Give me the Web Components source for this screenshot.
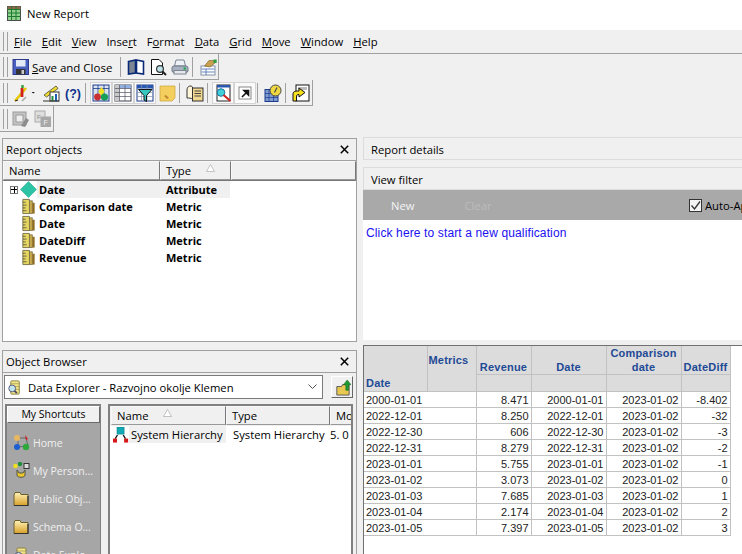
<!DOCTYPE html>
<html>
<head>
<meta charset="utf-8">
<title>New Report</title>
<style>
    html, body { margin: 0; padding: 0; background: #f0f0f0; }
    body { width: 742px; height: 554px; overflow: hidden; font-family: "Open Sans", "Noto Sans", sans-serif; font-size: 11.25px; color: #000; }
    .main { display: grid; grid-template-columns: 355px 379px; column-gap: 6px; padding: 6px 0 0 2px; }
    .left, .right { display: flex; flex-direction: column; }
    .left { gap: 8px; }
</style>
</head>
<body>
<title-bar>New Report</title-bar>
<menu-bar></menu-bar>
<tool-bar width="219"><tool-icon name="save" label="Save and Close"></tool-icon><tool-sep></tool-sep><tool-icon name="book"></tool-icon><tool-icon name="preview"></tool-icon><tool-icon name="print"></tool-icon><tool-sep></tool-sep><tool-icon name="hand"></tool-icon></tool-bar>
<tool-bar width="313"><tool-icon name="wand"></tool-icon><tool-icon name="drop" small></tool-icon><tool-icon name="chart"></tool-icon><tool-icon name="help"></tool-icon><tool-sep></tool-sep><tool-icon name="objects" on></tool-icon><tool-icon name="grid" on></tool-icon><tool-icon name="filter" on></tool-icon><tool-icon name="note"></tool-icon><tool-sep></tool-sep><tool-icon name="scroll"></tool-icon><tool-sep></tool-sep><tool-icon name="zoom" on></tool-icon><tool-icon name="link" on></tool-icon><tool-sep></tool-sep><tool-icon name="clock"></tool-icon><tool-sep></tool-sep><tool-icon name="arrow"></tool-icon></tool-bar>
<tool-bar width="54"><tool-icon name="gray1"></tool-icon><tool-icon name="gray2"></tool-icon></tool-bar>
<div class="main">
    <div class="left">
        <report-objects></report-objects>
        <object-browser></object-browser>
    </div>
    <div class="right">
        <report-details></report-details>
        <report-grid></report-grid>
    </div>
</div>
<script>
const ICONS = {
    save: '<rect x="1" y="1.5" width="15.5" height="15" fill="#4a5fc0" stroke="#2c3a8c"/><rect x="4" y="2" width="9.5" height="6.5" fill="#e4e9f6"/><rect x="4" y="11" width="9.5" height="5.5" fill="#333"/><rect x="9.5" y="12" width="2.5" height="4" fill="#ccc"/>',
    book: '<path d="M1.5 3.5 L8.5 2 V15 L1.5 16Z" fill="#7d8794" stroke="#0a2a78" stroke-width="1.6"/><path d="M9.5 2 L16.5 3.5 V16 L9.5 15Z" fill="#fff" stroke="#0a2a78" stroke-width="1.6"/>',
    preview: '<path d="M2.5 1.5H10L13.5 5V16.5H2.5Z" fill="#fff" stroke="#111"/><circle cx="11" cy="11" r="3.4" fill="#bfe2e8" stroke="#333" stroke-width="1.2"/><path d="M13.5 13.5L17 17" stroke="#222" stroke-width="1.9"/>',
    print: '<path d="M5 2H13L14.5 8H3.5Z" fill="#eef1f5" stroke="#7a8494"/><rect x="1" y="8" width="16" height="6.5" rx="2" fill="#a8b2c0" stroke="#6d7786"/><rect x="3" y="12.5" width="12" height="3.5" fill="#e6e8ec" stroke="#7a8494"/><rect x="12.5" y="9.5" width="2.5" height="2" fill="#1ca84a"/>',
    hand: '<rect x="2" y="8" width="14" height="9" fill="#fff" stroke="#8090a8"/><path d="M2.5 11H15.5M2.5 14H15.5M7 11V17" stroke="#4068b0" stroke-width=".8"/><path d="M5.5 8L10 2.5H14.5L16 5L11 9Z" fill="#c9a050" stroke="#7a5a20" stroke-width=".6"/><rect x="14.5" y="1.5" width="3.2" height="3.5" fill="#2f9e44"/>',
    wand: '<path d="M3 17L14 4" stroke="#e6c800" stroke-width="2.6"/><path d="M10 13L10 4" stroke="#d02020" stroke-width="2.8"/><path d="M10.5 4V1" stroke="#30a030" stroke-width="2.4"/><path d="M10 17L14 13" stroke="#aaa" stroke-width="1.6"/><path d="M3 17l3-1" stroke="#222"/>',
    drop: '<path d="M1 7H7L4 10Z" fill="#111"/>',
    chart: '<path d="M2 11L14 2L16 4.5L4.5 13Z" fill="#f0dc30" stroke="#333" stroke-width=".7"/><rect x="8" y="8" width="9" height="9" fill="#fff" stroke="#333"/><rect x="9.5" y="12" width="2" height="5" fill="#1c8f3c"/><rect x="13" y="10" width="2" height="7" fill="#1c5fb0"/><path d="M1 17H17" stroke="#333"/>',
    help: '<text x="9" y="13.5" text-anchor="middle" font-family="Liberation Sans" font-size="12.5" fill="#10308c" font-weight="700">(?)</text>',
    objects: '<rect x="1" y="1" width="16" height="16" fill="#dbe3f3" stroke="#1a3a8c"/><path d="M1 4.5H17M6 1V17M12 1V17" stroke="#1a3a8c" stroke-width=".8"/><path d="M9.5 3l3.2 4.5-3.2 4.5-3.2-4.5z" fill="#f0e020"/><circle cx="5.5" cy="13" r="3.4" fill="#c93030"/><circle cx="12.5" cy="13" r="3.6" fill="#18a058"/>',
    grid: '<rect x="1" y="1" width="16" height="16" fill="#fff" stroke="#445"/><rect x="1" y="1" width="16" height="3.5" fill="#8fb0e0"/><rect x="1" y="1" width="4.5" height="16" fill="#c8c8c8"/><path d="M1 4.5H17M1 8.5H17M1 12.5H17M5.5 1V17M11 1V17" stroke="#556" stroke-width=".7"/>',
    filter: '<rect x="1" y="1" width="16" height="16" fill="#fff" stroke="#1a3a8c"/><rect x="1" y="1" width="16" height="3.5" fill="#2a58b0"/><path d="M5.5 1V17M11 1V17M1 8.5H17M1 12.5H17" stroke="#8090b0" stroke-width=".7"/><path d="M2.5 5.5H16L10.5 11.5V17.5L8 16V11.5Z" fill="#36c8c0" stroke="#111"/>',
    note: '<path d="M2 2H17V14L14 17H2Z" fill="#f4cf5e" stroke="#c8a038" stroke-width=".7"/><path d="M6 12l3 3 2-1-3-3z" fill="#c08830"/>',
    scroll: '<path d="M1 6C1 2 5 1 6.5 3V15C5 14 3 14 1 14Z" fill="#fff6d8" stroke="#333"/><rect x="6.5" y="4" width="10.5" height="13" fill="#f0d890" stroke="#333"/><path d="M8.5 7H15M8.5 9.5H15M8.5 12H15" stroke="#333" stroke-width=".9"/>',
    zoom: '<rect x="3" y="1" width="13" height="16" fill="#fff" stroke="#222"/><rect x="3" y="1" width="13" height="2.5" fill="#2a58b0"/><circle cx="7" cy="8.5" r="3.8" fill="#40d0d8" stroke="#1a70a0"/><path d="M9.5 11L16.5 17" stroke="#d02020" stroke-width="2"/>',
    link: '<rect x="3" y="3" width="12" height="12" fill="#fff" stroke="#888"/><path d="M6 13L10.5 8.5M8 6.5H12.5V11Z" stroke="#111" stroke-width="1.6" fill="#111"/>',
    clock: '<rect x="1" y="5.5" width="13" height="12" fill="#7f9bd0" stroke="#1a3a8c"/><path d="M1 9.5H14M1 13.5H14M5 5.5V17M9.5 5.5V17" stroke="#1a3a8c" stroke-width=".7"/><circle cx="11.5" cy="6.5" r="5.5" fill="#f0d840" stroke="#444"/><path d="M13 3.5L10.5 8.5" stroke="#444" stroke-width="1.1"/>',
    arrow: '<rect x="4" y="1" width="13" height="16" fill="#fff" stroke="#111"/><rect x="6" y="3" width="9" height="3" fill="#bbb"/><path d="M1 17V10C1 7 4 7 7 7V4L13 8.5L7 13V10.5C5 10.5 4.5 11 4.5 13V17Z" fill="#f6e020" stroke="#111"/>',
    gray1: '<rect x="1" y="2" width="13" height="13" fill="#c4c4c4" stroke="#9a9a9a"/><rect x="4" y="5" width="7" height="7" fill="#eee" stroke="#9a9a9a"/><path d="M9 16L14 8L17 10L13 17Z" fill="#8c8c8c"/>',
    gray2: '<rect x="1" y="1" width="10" height="11" fill="#dedede" stroke="#aaa"/><rect x="6.5" y="6.5" width="10.5" height="10.5" fill="#a8a8a8"/><text x="3" y="8.5" font-family="Liberation Sans" font-size="6" fill="#888">F</text><text x="9.5" y="15" font-family="Liberation Sans" font-size="7" fill="#eee">F</text>',
    metric: '<g transform="translate(2 0)"><path d="M1 1.5H8V16.5H1Z" fill="#e6d760" stroke="#77714a"/><path d="M1 4.5H4M1 7.5H5M1 10.5H4M1 13.5H5" stroke="#444" stroke-width=".8"/><rect x="8" y="3" width="3" height="13.5" fill="#c9a94c" stroke="#77714a" stroke-width=".8"/><rect x="11" y="5" width="2.5" height="11.5" fill="#8f6d22"/></g>',
    attribute: '<path d="M9 .5L17.5 9L9 17.5L.5 9Z" fill="#2cc4a4" stroke="#1ea58a" stroke-width=".6"/>',
    hierarchy: '<rect x="4.5" y="0" width="8" height="8" fill="#11a9b4" stroke="#0a7a88" stroke-width=".6"/><path d="M5 9L2.5 13M11.5 9L14 13" stroke="#111" stroke-width="1.5"/><rect x="0" y="13" width="4.5" height="4.5" fill="#d81818"/><rect x="12.5" y="13" width="4.5" height="4.5" fill="#d81818"/>',
    home: '<path d="M5 4L13 4L15 12L5 13Z" fill="none" stroke="#666"/><circle cx="4" cy="4" r="3" fill="#e8b860"/><path d="M12 1L15 5L13 6Z" fill="#d81818"/><circle cx="4" cy="13" r="3" fill="#1c5fd0"/><circle cx="13" cy="13" r="3.2" fill="#2fa83c"/>',
    personal: '<path d="M4 8V13C4 16 12 16 12 13V8L10 11H6Z" fill="#ecc82c" stroke="#554"/><circle cx="2.5" cy="4" r="2.3" fill="#f0e020"/><circle cx="7" cy="2" r="2.2" fill="#1c8f3c"/><rect x="11" y="1.5" width="5" height="5" fill="#ddd" stroke="#333"/>',
    folder: '<path d="M1 5L2 2.5H7L8 4.5H15V15.5H1Z" fill="url(#fg)" stroke="#6a6030"/><defs><linearGradient id="fg" x1="0" y1="0" x2="0" y2="1"><stop offset="0" stop-color="#fff2b8"/><stop offset="1" stop-color="#d8a028"/></linearGradient></defs><path d="M1 15.5H15V6" fill="none" stroke="#333" stroke-width="1.2"/>',
    explorer: '<rect x="4" y="2" width="9" height="14" rx="1" fill="#f3e68a" stroke="#8a8040"/><path d="M4 5H13M4 8H13M4 11H13" stroke="#9a9050" stroke-width=".7"/><circle cx="5.5" cy="10" r="3.6" fill="#bfe6ee" stroke="#557"/><path d="M8 12.5L10.5 15" stroke="#446" stroke-width="1.8"/>',
    up: '<path d="M3 8H8L9 6H16V17H3Z" fill="#e8c850" stroke="#555"/><path d="M14 1L18 6H15.5V12H12.5V6H10Z" fill="#1f9a30" stroke="#0c5c18" stroke-width=".5"/>'
};

function svgIcon(name, size)
{
    return `<svg width="${size}" height="${size}" viewBox="0 0 18 18" style="display:block;flex:none">${ICONS[name]}</svg>`;
}

class TitleBar extends HTMLElement
{
    constructor()
    {
        super();
        this.attachShadow({ mode: 'open' });
        this.shadowRoot.innerHTML = `
            <style>
                :host { display: flex; align-items: center; height: 30px; box-sizing: border-box; padding: 0 0 3px 7px; gap: 6px; background: #fff; font-size: 11.25px; color: #000; }
            </style>
            <svg width="14" height="15" viewBox="0 0 14 15">
                <rect x=".5" y=".5" width="13" height="14" fill="#8fd08f" stroke="#4c4c4c"/>
                <rect x=".5" y=".5" width="13" height="3" fill="#8a6a4a"/>
                <path d="M.5 3.5H13.5M.5 7H13.5M.5 10.5H13.5M4.5 .5V14.5M9 .5V14.5" stroke="#1e7a2e" stroke-width="1"/>
            </svg>
            <slot></slot>
        `;
    }
}

class MenuBar extends HTMLElement
{
    constructor()
    {
        super();
        this.attachShadow({ mode: 'open' });
        const items = [['F', 'ile'], ['E', 'dit'], ['V', 'iew'], ['Inse', 'r', 't'], ['F', 'o', 'rmat'], ['D', 'ata'], ['G', 'rid'], ['M', 'ove'], ['W', 'indow'], ['H', 'elp']];
        const html = items.map(i =>
        {
            if (i.length === 3) return `<span>${i[0]}<u>${i[1]}</u>${i[2]}</span>`;
            return `<span><u>${i[0]}</u>${i[1]}</span>`;
        }).join('');
        this.shadowRoot.innerHTML = `
            <style>
                :host { display: flex; align-items: center; height: 23px; border-bottom: 1px solid #a0a0a0; padding-left: 3px; background: #f0f0f0; font-size: 11.25px; }
                .grip { width: 3px; height: 19px; border-left: 1px solid #a0a0a0; border-right: 1px solid #a0a0a0; margin-right: 6px; }
                .items { display: flex; gap: 10px; }
                u { text-underline-offset: 1px; }
            </style>
            <div class="grip"></div>
            <div class="items">${html}</div>
        `;
    }
}

class ToolBar extends HTMLElement
{
    constructor()
    {
        super();
        this.attachShadow({ mode: 'open' });
        this.shadowRoot.innerHTML = `
            <style>
                :host { display: flex; align-items: center; box-sizing: border-box; height: 26px; border-bottom: 1px solid #a0a0a0; border-right: 1px solid #a0a0a0; padding: 1px 0 0 3px; }
                .grip { width: 3px; height: 20px; border-left: 1px solid #a0a0a0; border-right: 1px solid #a0a0a0; margin-right: 2px; flex: none; }
                .row { display: flex; align-items: center; }
            </style>
            <div class="grip"></div>
            <div class="row"><slot></slot></div>
        `;
    }

    connectedCallback()
    {
        this.style.width = this.getAttribute('width') + 'px';
    }
}

class ToolSep extends HTMLElement
{
    constructor()
    {
        super();
        this.attachShadow({ mode: 'open' });
        this.shadowRoot.innerHTML = `
            <style>:host { display: block; width: 1px; height: 20px; background: #a0a0a0; margin: 0 4px 0 1px; }</style>
        `;
    }
}

class ToolIcon extends HTMLElement
{
    connectedCallback()
    {
        const name = this.getAttribute('name');
        const label = this.getAttribute('label');
        const small = this.hasAttribute('small');
        let caption = '';
        if (label) caption = `<span class="cap"><u>${label[0]}</u>${label.slice(1)}</span>`;
        this.attachShadow({ mode: 'open' });
        this.shadowRoot.innerHTML = `
            <style>
                :host { display: flex; align-items: center; justify-content: center; height: 22px; box-sizing: border-box; gap: 2px; flex: none; width: ${label ? 'auto' : (small ? '8px' : '22px')}; padding: 0 ${label ? '7px 0 2px' : '0'}; font-size: 11.5px; }
                :host([on]) { background: #fafafa; border: 1px solid #d4d4d4; }
                .cap { white-space: nowrap; }
            </style>
            ${svgIcon(name, small ? 10 : 18)}${caption}
        `;
    }
}

class DockPanel extends HTMLElement
{
    constructor()
    {
        super();
        this.attachShadow({ mode: 'open' });
        this.shadowRoot.innerHTML = `
            <style>
                :host { display: block; box-sizing: border-box; border: 1px solid #a0a0a0; font-size: 11.25px; }
                .head { display: flex; align-items: center; justify-content: space-between; height: 21px; padding: 0 7px 0 3px; border-bottom: 1px solid #a0a0a0; }
                svg { display: block; }
            </style>
            <div class="head"><slot name="title"></slot><svg width="9" height="9"><path d="M.8 .8L8.2 8.2M8.2 .8L.8 8.2" stroke="#000" stroke-width="1.5"/></svg></div>
            <slot></slot>
        `;
    }
}

class ColHeader extends HTMLElement
{
    constructor()
    {
        super();
        this.attachShadow({ mode: 'open' });
        this.shadowRoot.innerHTML = `
            <style>
                :host { display: flex; align-items: center; box-sizing: border-box; height: 100%; flex: none; background: #f0f0f0; border: 1px solid; border-color: #f8f8f8 #777 #999 #f8f8f8; padding-left: 5px; font-size: 11.25px; white-space: nowrap; overflow: hidden; }
            </style>
            <slot></slot>
        `;
    }

    connectedCallback()
    {
        if (this.hasAttribute('sort'))
        {
            const s = document.createElementNS('http://www.w3.org/2000/svg', 'svg');
            s.setAttribute('width', '9');
            s.setAttribute('height', '8');
            s.innerHTML = '<path d="M4.5 .5L8.5 7.5H.5Z" fill="#fff" stroke="#aaa" stroke-width=".7"/>';
            s.style.margin = '-6px 0 0 ' + this.getAttribute('sort') + 'px';
            s.style.display = 'block';
            this.shadowRoot.appendChild(s);
        }
    }
}

class ReportObjects extends HTMLElement
{
    constructor()
    {
        super();
        this.attachShadow({ mode: 'open' });
        const rows = [
            ['attribute', 'Date', 'Attribute'],
            ['metric', 'Comparison date', 'Metric'],
            ['metric', 'Date', 'Metric'],
            ['metric', 'DateDiff', 'Metric'],
            ['metric', 'Revenue', 'Metric']
        ];
        const html = rows.map((r, i) => `
            <div class="row ${i === 0 ? 'sel' : ''}">
                <span class="exp">${i === 0 ? '<b></b>' : ''}</span>
                <span class="ic">${svgIcon(r[0], 17)}</span>
                <span class="name">${r[1]}</span>
                <span class="type">${r[2]}</span>
            </div>`).join('');
        this.shadowRoot.innerHTML = `
            <style>
                :host { display: block; }
                dock-panel { height: 204px; }
                .cols { display: flex; height: 19px; border-bottom: 1px solid #777; }
                .rows { background: #fff; height: 160px; font-weight: 700; font-size: 11px; }
                .row { display: flex; align-items: center; height: 17px; }
                .exp { width: 8px; height: 8px; margin: 0 0 0 7px; flex: none; }
                .exp b { display: block; width: 8px; height: 8px; box-sizing: border-box; border: 1px solid #777; background: linear-gradient(#000,#000) center/6px 1px no-repeat, linear-gradient(#000,#000) center/1px 6px no-repeat, #fff; }
                .ic { width: 21px; flex: none; display: flex; justify-content: center; }
                .name { flex: none; box-sizing: border-box; margin-left: -2px; padding-left: 2px; width: 122px; }
                .type { width: 71px; padding-left: 7px; box-sizing: border-box; }
                .sel .name, .sel .type { background: #f0f0f0; height: 17px; line-height: 17px; }
            </style>
            <dock-panel>
                <span slot="title">Report objects</span>
                <div class="cols">
                    <col-header style="width:157px">Name</col-header>
                    <col-header style="width:71px" sort="15">Type</col-header>
                    <col-header style="flex:1"></col-header>
                </div>
                <div class="rows">${html}</div>
            </dock-panel>
        `;
    }
}

class ObjectBrowser extends HTMLElement
{
    constructor()
    {
        super();
        this.attachShadow({ mode: 'open' });
        const shortcuts = [['home', 'Home'], ['personal', 'My Person...'], ['folder', 'Public Obj...'], ['folder', 'Schema O...'], ['explorer', 'Data Explo...']];
        const side = shortcuts.map(s => `<div class="sc">${svgIcon(s[0], 18)}<span>${s[1]}</span></div>`).join('');
        this.shadowRoot.innerHTML = `
            <style>
                :host { display: block; }
                dock-panel { height: 230px; }
                .bar { display: flex; align-items: flex-start; gap: 8px; padding: 2px 0 0 1px; height: 24px; }
                .combo { width: 319px; height: 24px; box-sizing: border-box; background: #fff; border: 1px solid #7a7a7a; display: flex; align-items: center; gap: 4px; padding-left: 2px; font-size: 11.25px; }
                .combo svg.chev { margin-left: auto; margin-right: 5px; }
                .up { width: 22px; height: 22px; margin-top: 1px; box-sizing: border-box; border: 1px solid; border-color: #fff #666 #666 #fff; display: flex; align-items: center; justify-content: center; }
                .body { display: flex; padding: 5px 0 0 2px; gap: 7px; }
                .side { width: 96px; height: 170px; box-sizing: border-box; background: #a6a6a6; border: 1px solid #808080; border-width: 2px 1px 0 2px; overflow: hidden; flex: none; }
                .tab { height: 17px; box-sizing: border-box; background: #f0f0f0; border: 1px solid; border-color: #fff #6a6a6a #6a6a6a #fff; text-align: center; line-height: 15px; font-size: 10.5px; margin-bottom: 6px; white-space: nowrap; }
                .sc { display: flex; align-items: center; gap: 2px; height: 28px; padding-left: 6px; color: #f0f0f0; font-size: 10.5px; white-space: nowrap; }
                .list { width: 245px; height: 170px; flex: none; box-sizing: border-box; background: #fff; border: 2px solid #808080; border-bottom: 0; overflow: hidden; }
                .cols { display: flex; height: 19px; border-bottom: 1px solid #f0f0f0; background: #f0f0f0; padding-left: 1px; overflow: hidden; }
                .row { display: flex; align-items: center; height: 17px; white-space: nowrap; padding-left: 3px; overflow: hidden; }
                .row .nm { width: 97px; box-sizing: border-box; background: #f0f0f0; padding-left: 2px; height: 17px; line-height: 17px; flex: none; }
                .row .ty { width: 104px; padding-left: 7px; flex: none; box-sizing: border-box; }
            </style>
            <dock-panel>
                <span slot="title">Object Browser</span>
                <div class="bar">
                    <div class="combo">${svgIcon('explorer', 17)}<span>Data Explorer - Razvojno okolje Klemen</span>
                        <svg class="chev" width="9" height="6"><path d="M.5 .5L4.5 4.5L8.5 .5" fill="none" stroke="#555"/></svg>
                    </div>
                    <div class="up">${svgIcon('up', 17)}</div>
                </div>
                <div class="body">
                    <div class="side">
                        <div class="tab">My Shortcuts</div>
                        ${side}
                    </div>
                    <div class="list">
                        <div class="cols">
                            <col-header style="width:115px" sort="15">Name</col-header>
                            <col-header style="width:104px">Type</col-header>
                            <col-header style="width:30px">Mo</col-header>
                        </div>
                        <div class="row">${svgIcon('hierarchy', 16)}<span class="nm">System Hierarchy</span><span class="ty">System Hierarchy</span><span>5. 0</span></div>
                    </div>
                </div>
            </dock-panel>
        `;
    }
}

class ReportDetails extends HTMLElement
{
    constructor()
    {
        super();
        this.attachShadow({ mode: 'open' });
        this.shadowRoot.innerHTML = `
            <style>
                :host { display: block; font-size: 11.25px; margin-top: -1px; }
                .cap { height: 23px; box-sizing: border-box; border: 1px solid #dcdcdc; border-right: 0; padding: 2px 0 0 7px; display: flex; align-items: center; }
                .vf { margin-top: 7px; height: 23px; }
                .band { background: #a9a9a9; height: 30px; display: flex; align-items: center; }
                .band .new { color: #f4f4f4; margin-left: 28px; }
                .band .clear { color: #bdbdbd; margin-left: 50px; }
                .auto { margin-left: auto; display: flex; align-items: center; gap: 3px; width: 53px; white-space: nowrap; overflow: hidden; color: #000; }
                .box { width: 13px; height: 13px; flex: none; box-sizing: border-box; background: #f4f4f4; border: 1px solid #333; }
                .link { background: #fff; height: 120px; box-sizing: border-box; padding: 6px 0 0 3px; color: #1a10f0; font-family: "Liberation Sans", sans-serif; font-size: 12px; letter-spacing: .13px; }
            </style>
            <div class="cap">Report details</div>
            <div class="cap vf">View filter</div>
            <div class="band">
                <span class="new">New</span>
                <span class="clear">Clear</span>
                <span class="auto"><span class="box"><svg width="11" height="11" style="display:block"><path d="M1.5 5.5L4.5 9L10 1.5" fill="none" stroke="#333" stroke-width="1.3"/></svg></span>Auto-Apply</span>
            </div>
            <div class="link">Click here to start a new qualification</div>
        `;
    }
}

class ReportGrid extends HTMLElement
{
    constructor()
    {
        super();
        this.attachShadow({ mode: 'open' });
        const rows = [
            ['2000-01-01', '8.471', '-8.402'],
            ['2022-12-01', '8.250', '-32'],
            ['2022-12-30', '606', '-3'],
            ['2022-12-31', '8.279', '-2'],
            ['2023-01-01', '5.755', '-1'],
            ['2023-01-02', '3.073', '0'],
            ['2023-01-03', '7.685', '1'],
            ['2023-01-04', '2.174', '2'],
            ['2023-01-05', '7.397', '3']
        ];
        const body = rows.map(r => `
            <tr>
                <td colspan="2">${r[0]}</td>
                <td class="n">${r[1]}</td>
                <td class="n">${r[0]}</td>
                <td class="n">2023-01-02</td>
                <td class="n">${r[2]}</td>
            </tr>`).join('');
        this.shadowRoot.innerHTML = `
            <style>
                :host { display: block; margin-top: 5px; height: 210px; background: #fff; border-top: 1px solid #707070; border-left: 1px solid #707070; font-family: "Liberation Sans", sans-serif; font-size: 11px; overflow: hidden; }
                table { border-collapse: collapse; table-layout: fixed; width: 366px; }
                th { background: #dcdcdc; color: #1f4a96; font-weight: 700; font-size: 11px; border: 1px solid #c2c2c2; padding: 0 1px; text-align: center; line-height: 14px; letter-spacing: .2px; }
                tr.h1 th { height: 27px; vertical-align: bottom; }
                tr.h2 th { height: 16px; }
                tr.h1 th.date { text-align: left; vertical-align: bottom; padding: 0 2px 1px; }
                tr.h1 th.metrics { text-align: left; vertical-align: top; padding: 7px 1px 0; }
                td { height: 16px; padding: 1px 2px 0; box-sizing: border-box; border: 1px solid #c2c2c2; color: #222; line-height: 14px; white-space: nowrap; }
                td.n { text-align: right; }
                tr:first-child th { border-top: 0; }
                tr > :first-child { border-left: 0; }
            </style>
            <table>
                <colgroup><col style="width:63px"><col style="width:49px"><col style="width:55px"><col style="width:75px"><col style="width:75px"><col style="width:49px"></colgroup>
                <tr class="h1">
                    <th class="date" rowspan="2">Date</th>
                    <th class="metrics" rowspan="2">Metrics</th>
                    <th>Revenue</th>
                    <th>Date</th>
                    <th>Comparison date</th>
                    <th>DateDiff</th>
                </tr>
                <tr class="h2"><th></th><th></th><th></th><th></th></tr>
                ${body}
            </table>
        `;
    }
}

customElements.define('title-bar', TitleBar);
customElements.define('menu-bar', MenuBar);
customElements.define('tool-bar', ToolBar);
customElements.define('tool-sep', ToolSep);
customElements.define('tool-icon', ToolIcon);
customElements.define('dock-panel', DockPanel);
customElements.define('col-header', ColHeader);
customElements.define('report-objects', ReportObjects);
customElements.define('object-browser', ObjectBrowser);
customElements.define('report-details', ReportDetails);
customElements.define('report-grid', ReportGrid);
</script>
</body>
</html>
